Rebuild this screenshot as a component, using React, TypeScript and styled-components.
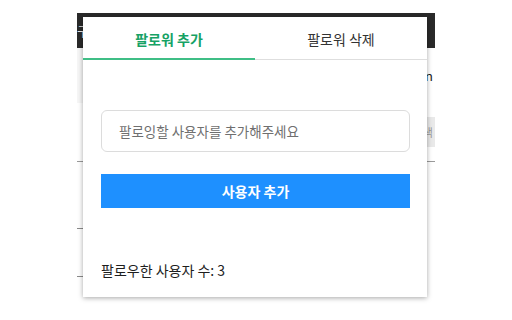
import React, { useState } from 'react'
import styled, { createGlobalStyle } from 'styled-components'

const GlobalStyle = createGlobalStyle`
    html, body {
        margin: 0;
        padding: 0;
        background: #ffffff;
    }
    body {
        font-family: "Noto Sans CJK KR", "Noto Sans", sans-serif;
        width: 512px;
        height: 320px;
        overflow: hidden;
    }
`

const Screen = styled.div`
    position: relative;
    width: 512px;
    height: 320px;
    padding: 13px 0 0 77px;
    box-sizing: border-box;
`

// page behind the popup, mostly hidden
const BackPage = styled.div`
    width: 358px;
    display: flex;
    flex-direction: column;
`

const TopBar = styled.div`
    height: 35px;
    background: #2a2a2a;
    color: #e8e8e8;
    font-size: 13px;
    display: flex;
    align-items: center;
`

const InfoRow = styled.div`
    height: 55px;
    display: flex;
    justify-content: space-between;
    align-items: center;
`

const SideShade = styled.div`
    width: 60px;
    height: 100%;
    background: #f6f6f6;
`

const LoginText = styled.span`
    font-size: 13px;
    color: #222;
    padding-right: 2px;
`

const ActionRow = styled.div`
    height: 58px;
    display: flex;
    justify-content: flex-end;
    align-items: center;
    border-bottom: 1px solid #9a9a9a;
`

const GreyButton = styled.div`
    width: 60px;
    height: 30px;
    background: #e9e9e9;
    color: #999;
    font-size: 11px;
    display: flex;
    align-items: center;
    justify-content: flex-end;
    padding-right: 2px;
`

const ListItem = styled.div<{ $h: number }>`
    width: 120px;
    height: ${p => p.$h}px;
    border-bottom: 1px solid #8a8a8a;
`

// popup
const Popup = styled.div`
    position: absolute;
    left: 83px;
    top: 17px;
    width: 344px;
    height: 280px;
    background: #ffffff;
    box-shadow: 0 1px 5px rgba(0, 0, 0, 0.35);
    display: flex;
    flex-direction: column;
`

const TabBar = styled.div`
    display: flex;
    height: 42px;
    border-bottom: 1px solid #dedede;
`

const Tab = styled.button<{ $active: boolean }>`
    flex: 1;
    height: 43px;
    margin-bottom: -1px;
    border: none;
    border-bottom: 2px solid ${p => (p.$active ? '#3fbe86' : 'transparent')};
    background: transparent;
    font-family: inherit;
    font-size: 14px;
    font-weight: ${p => (p.$active ? 700 : 400)};
    color: ${p => (p.$active ? '#16a265' : '#333333')};
    padding: 3px 0 0;
    cursor: pointer;
`

const Body = styled.div`
    flex: 1;
    padding: 50px 17px 0 18px;
    display: flex;
    flex-direction: column;
`

const UserInput = styled.input`
    height: 42px;
    box-sizing: border-box;
    border: 1px solid #dcdcdc;
    border-radius: 6px;
    padding: 0 0 0 17px;
    font-family: inherit;
    font-size: 13.5px;
    color: #333;
    outline: none;

    &::placeholder {
        color: #6f6f6f;
    }
`

const AddButton = styled.button`
    margin-top: 22px;
    height: 34px;
    border: none;
    background: #1e90ff;
    color: #ffffff;
    font-family: inherit;
    font-size: 14px;
    font-weight: 700;
    cursor: pointer;
`

const Count = styled.p`
    margin: 52px 0 0;
    font-size: 14px;
    line-height: 20px;
    color: #1e1e1e;
`

const App = () => {
    const [tab, setTab] = useState<'add' | 'remove'>('add')
    const [name, setName] = useState('')

    return (
        <Screen>
            <GlobalStyle />
            <BackPage>
                <TopBar>구독</TopBar>
                <InfoRow>
                    <SideShade />
                    <LoginText>Login</LoginText>
                </InfoRow>
                <ActionRow>
                    <GreyButton>검색</GreyButton>
                </ActionRow>
                <ListItem $h={66} />
                <ListItem $h={47} />
            </BackPage>
            <Popup>
                <TabBar>
                    <Tab $active={tab === 'add'} onClick={() => setTab('add')}>팔로워 추가</Tab>
                    <Tab $active={tab === 'remove'} onClick={() => setTab('remove')}>팔로워 삭제</Tab>
                </TabBar>
                <Body>
                    <UserInput
                        value={name}
                        onChange={e => setName(e.target.value)}
                        placeholder="팔로잉할 사용자를 추가해주세요"
                    />
                    <AddButton>사용자 추가</AddButton>
                    <Count>팔로우한 사용자 수: 3</Count>
                </Body>
            </Popup>
        </Screen>
    )
}

export default App
